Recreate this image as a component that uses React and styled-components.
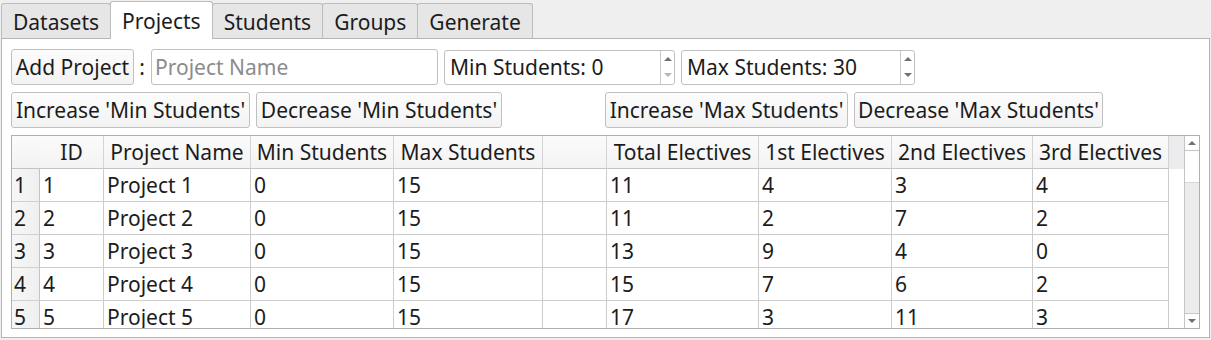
import React from 'react';
import styled, { createGlobalStyle } from 'styled-components';

const GlobalStyle = createGlobalStyle`
  html, body {
    margin: 0;
    padding: 0;
    background: #efeff0;
    font-family: "Noto Sans", "Open Sans", sans-serif;
    font-size: 21px;
    color: #1c1c1c;
  }
  * { box-sizing: border-box; }
`;

const tabs = ['Datasets', 'Projects', 'Students', 'Groups', 'Generate'];

const columns = [
  { title: 'ID', width: 64 },
  { title: 'Project Name', width: 147 },
  { title: 'Min Students', width: 143 },
  { title: 'Max Students', width: 149 },
  { title: '', width: 64 },
  { title: 'Total Electives', width: 152 },
  { title: '1st Electives', width: 133 },
  { title: '2nd Electives', width: 141 },
  { title: '3rd Electives', width: 136 },
];

const rows = [
  ['1', 'Project 1', '0', '15', '', '11', '4', '3', '4'],
  ['2', 'Project 2', '0', '15', '', '11', '2', '7', '2'],
  ['3', 'Project 3', '0', '15', '', '13', '9', '4', '0'],
  ['4', 'Project 4', '0', '15', '', '15', '7', '6', '2'],
  ['5', 'Project 5', '0', '15', '', '17', '3', '11', '3'],
];

const template = `28px ${columns.map((c) => c.width + 'px').join(' ')} 1fr`;

export default function App() {
  return (
    <>
      <GlobalStyle />
      <TabBar>
        {tabs.map((t) => (
          <Tab key={t} $active={t === 'Projects'}>{t}</Tab>
        ))}
      </TabBar>
      <Pane>
        <Toolbar>
          <Button $w={123}>Add Project</Button>
          <Colon>:</Colon>
          <TextInput placeholder="Project Name" />
          <SpinBox $w={231} value="Min Students: 0" downDisabled />
          <SpinBox $w={234} value="Max Students: 30" />
        </Toolbar>
        <Toolbar>
          <Button $w={239}>Increase 'Min Students'</Button>
          <Button $w={246}>Decrease 'Min Students'</Button>
          <Spacer />
          <Button $w={243}>Increase 'Max Students'</Button>
          <Button $w={249}>Decrease 'Max Students'</Button>
        </Toolbar>
        <TableFrame>
          <Grid>
            <HeaderRow>
              <Corner />
              {columns.map((c, i) => (
                <HeadCell key={i}>{c.title}</HeadCell>
              ))}
              <HeadFiller />
            </HeaderRow>
            {rows.map((r, i) => (
              <Row key={i}>
                <RowHead>{i + 1}</RowHead>
                {r.map((v, j) => (
                  <Cell key={j}>{v}</Cell>
                ))}
                <div />
              </Row>
            ))}
          </Grid>
          <ScrollBar>
            <ScrollArrow>
              <Triangle $dir="up" />
            </ScrollArrow>
            <Handle />
            <Track />
            <ScrollArrow $bottom>
              <Triangle $dir="down" />
            </ScrollArrow>
          </ScrollBar>
        </TableFrame>
      </Pane>
    </>
  );
}

const SpinBox = ({ value, $w, downDisabled }) => (
  <SpinFrame $w={$w}>
    <SpinText>{value}</SpinText>
    <SpinButtons>
      <SpinArrow>
        <Triangle $dir="up" />
      </SpinArrow>
      <SpinArrow>
        <Triangle $dir="down" $light={downDisabled} />
      </SpinArrow>
    </SpinButtons>
  </SpinFrame>
);

const TabBar = styled.div`
  display: flex;
  align-items: flex-end;
  height: 38px;
  padding-left: 1px;
`;

const Tab = styled.div`
  display: flex;
  align-items: center;
  justify-content: center;
  height: ${(p) => (p.$active ? '38px' : '35px')};
  margin-bottom: ${(p) => (p.$active ? '-1px' : '0')};
  margin-right: -1px;
  padding: 0 11px;
  padding-top: ${(p) => (p.$active ? '0' : '1px')};
  background: ${(p) => (p.$active ? '#ffffff' : '#e6e6e7')};
  border: 1px solid #bcbcbc;
  border-bottom: none;
  border-radius: 3px 3px 0 0;
  position: relative;
  z-index: ${(p) => (p.$active ? 1 : 0)};
`;

const Pane = styled.div`
  margin: 0 1px;
  height: 300px;
  background: #ffffff;
  border: 1px solid #b5b5b5;
  padding: 10px 9px 8px 9px;
  display: flex;
  flex-direction: column;
  gap: 7px;
`;

const Toolbar = styled.div`
  display: flex;
  align-items: center;
  height: 36px;
  gap: 6px;
`;

const Button = styled.div`
  width: ${(p) => p.$w}px;
  height: 36px;
  display: flex;
  align-items: center;
  justify-content: center;
  white-space: nowrap;
  background: linear-gradient(#fcfcfc, #f3f3f3);
  border: 1px solid #c0c0c0;
  border-radius: 3px;
`;

const Colon = styled.span`
  width: 6px;
  text-align: center;
  margin-left: -1px;
`;

const TextInput = styled.input`
  width: 287px;
  height: 36px;
  border: 1px solid #c0c0c0;
  border-radius: 3px;
  padding: 0 3px;
  font: inherit;
  color: #1c1c1c;
  outline: none;
  &::placeholder {
    color: #8c8c8c;
  }
`;

const Spacer = styled.div`
  width: 91px;
`;

const SpinFrame = styled.div`
  width: ${(p) => p.$w}px;
  height: 35px;
  display: flex;
  border: 1px solid #c0c0c0;
  border-radius: 3px;
  background: #ffffff;
`;

const SpinText = styled.div`
  flex: 1;
  display: flex;
  align-items: center;
  padding-left: 5px;
  white-space: nowrap;
`;

const SpinButtons = styled.div`
  width: 14px;
  display: flex;
  flex-direction: column;
  border-left: 1px solid #c8c8c8;
`;

const SpinArrow = styled.div`
  flex: 1;
  display: flex;
  align-items: center;
  justify-content: center;
`;

const Triangle = styled.div`
  width: 0;
  height: 0;
  border-left: 4px solid transparent;
  border-right: 4px solid transparent;
  ${(p) =>
    p.$dir === 'up'
      ? `border-bottom: 4px solid ${p.$light ? '#b8b8b8' : '#707070'};`
      : `border-top: 4px solid ${p.$light ? '#b8b8b8' : '#707070'};`}
`;

const TableFrame = styled.div`
  height: 194px;
  display: flex;
  border: 1px solid #b0b0b0;
  overflow: hidden;
`;

const Grid = styled.div`
  flex: 1;
  display: flex;
  flex-direction: column;
  overflow: hidden;
`;

const HeaderRow = styled.div`
  display: grid;
  grid-template-columns: ${template};
  height: 33px;
  flex-shrink: 0;
`;

const Corner = styled.div`
  background: linear-gradient(#fbfbfb, #f2f2f3);
  border-bottom: 1px solid #c4c4c4;
`;

const HeadCell = styled.div`
  display: flex;
  align-items: center;
  justify-content: center;
  white-space: nowrap;
  background: linear-gradient(#fbfbfb, #f3f3f4);
  border-right: 1px solid #d4d4d4;
  border-bottom: 1px solid #c4c4c4;
`;

const HeadFiller = styled.div`
  background: #ececee;
`;

const Row = styled.div`
  display: grid;
  grid-template-columns: ${template};
  height: 33px;
  flex-shrink: 0;
`;

const RowHead = styled.div`
  display: flex;
  align-items: center;
  padding-left: 2px;
  background: linear-gradient(90deg, #f7f7f7, #efeff0);
  border-right: 1px solid #c4c4c4;
  border-bottom: 1px solid #d0d0d0;
`;

const Cell = styled.div`
  display: flex;
  align-items: center;
  padding-left: 3px;
  white-space: nowrap;
  border-right: 1px solid #cdcdcd;
  border-bottom: 1px solid #cdcdcd;
`;

const ScrollBar = styled.div`
  width: 15px;
  display: flex;
  flex-direction: column;
  border-left: 1px solid #c4c4c4;
`;

const ScrollArrow = styled.div`
  height: 15px;
  display: flex;
  align-items: center;
  justify-content: center;
  background: #ffffff;
  border-top: ${(p) => (p.$bottom ? '1px solid #c4c4c4' : 'none')};
  border-bottom: ${(p) => (p.$bottom ? 'none' : '1px solid #c4c4c4')};
`;

const Handle = styled.div`
  height: 32px;
  background: #ffffff;
  border-bottom: 1px solid #d8d8d8;
`;

const Track = styled.div`
  flex: 1;
  background: #ececec;
`;
